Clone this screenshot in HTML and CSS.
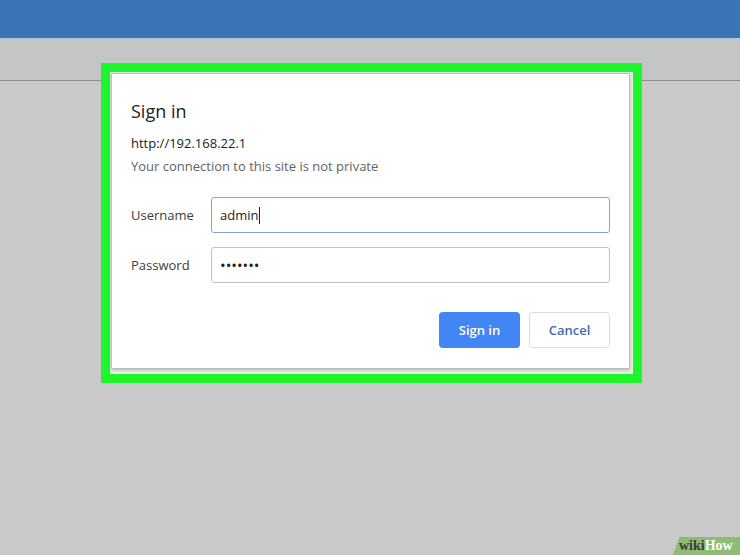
FILE: index.html
```html
<!DOCTYPE html>
<html lang="en">
<head>
    <meta charset="UTF-8">
    <meta name="viewport" content="width=device-width, initial-scale=1.0">
    <title>Sign in</title>
    <link rel="stylesheet" href="styles.css">
</head>
<body>
    <div class="topbar"></div>
    <div class="toolbar"></div>

    <div class="highlight">
        <div class="dialog">
            <h2 class="title">Sign in</h2>
            <div class="url">http://192.168.22.1</div>
            <div class="note">Your connection to this site is not private</div>

            <div class="form">
                <div class="row">
                    <label>Username</label>
                    <div class="field focused">admin<span class="caret"></span></div>
                </div>
                <div class="row">
                    <label>Password</label>
                    <div class="field dots">&bull;&bull;&bull;&bull;&bull;&bull;&bull;</div>
                </div>
            </div>

            <div class="actions">
                <button class="btn primary">Sign in</button>
                <button class="btn secondary">Cancel</button>
            </div>
        </div>
    </div>

    <div class="badge"><span class="wiki">wiki</span><span class="how">How</span></div>
</body>
</html>
```

FILE: styles.css
```css
body {
    margin: 0;
    height: 555px;
    overflow: hidden;
    background-color: #c9c9c9;
    font-family: "Open Sans", Arial, sans-serif;
    position: relative;
}
.topbar {
    height: 38px;
    background-color: #3a75b8;
    border-bottom: 1px solid #b3c4d9;
}
.toolbar {
    height: 41px;
    background-color: #c4c5c7;
    border-bottom: 1px solid #8d8d8d;
}
/* green frame around the browser prompt */
.highlight {
    position: absolute;
    top: 63px;
    left: 101px;
    width: 519px;
    border: 9px solid #1ff52c;
    padding: 1px 3px 5px 1px;
    background-color: #e6eee6;
}
.dialog {
    background-color: #fff;
    border: 1px solid #bcbcbc;
    border-radius: 2px;
    box-shadow: 0 1px 3px rgba(0, 0, 0, 0.25);
    padding: 25px 19px 20px 19px;
    width: 479px;
}
.title {
    margin: 0;
    font-size: 18px;
    line-height: 24px;
    font-weight: normal;
    color: #202124;
}
.url {
    margin-top: 11px;
    font-size: 13px;
    line-height: 18px;
    color: #202124;
}
.note {
    margin-top: 5px;
    font-size: 13px;
    line-height: 18px;
    color: #5f6368;
}
.form {
    margin-top: 22px;
    display: flex;
    flex-direction: column;
    gap: 14px;
}
.row {
    display: flex;
    align-items: center;
}
.row label {
    width: 80px;
    font-size: 13px;
    color: #3c4043;
}
.field {
    flex: 1;
    height: 34px;
    border: 1px solid #c2c2c2;
    border-radius: 3px;
    padding: 0 8px;
    display: flex;
    align-items: center;
    font-size: 13px;
    color: #202124;
}
.field.focused {
    border-color: #86a3d3;
}
.caret {
    display: inline-block;
    width: 1px;
    height: 17px;
    margin-left: 1px;
    background-color: #202124;
}
.dots {
    font-size: 15px;
}
.actions {
    margin-top: 29px;
    display: flex;
    justify-content: flex-end;
    gap: 9px;
}
.btn {
    width: 81px;
    height: 36px;
    border-radius: 4px;
    font-family: "Open Sans", Arial, sans-serif;
    font-size: 13px;
    font-weight: 600;
    cursor: pointer;
}
.primary {
    background-color: #4285f4;
    border: none;
    color: #fff;
}
.secondary {
    background-color: #fff;
    border: 1px solid #dcdcdc;
    color: #3c6ab8;
}
.badge {
    position: absolute;
    right: 0;
    bottom: 0;
    width: 61px;
    height: 18px;
    padding-left: 7px;
    background: linear-gradient(110deg, transparent 7px, #8fbb74 7px);
    font-family: "Liberation Serif", serif;
    font-weight: bold;
    font-size: 14px;
    line-height: 18px;
}
.wiki {
    color: #3b3b3b;
}
.how {
    color: #fff;
}
```
